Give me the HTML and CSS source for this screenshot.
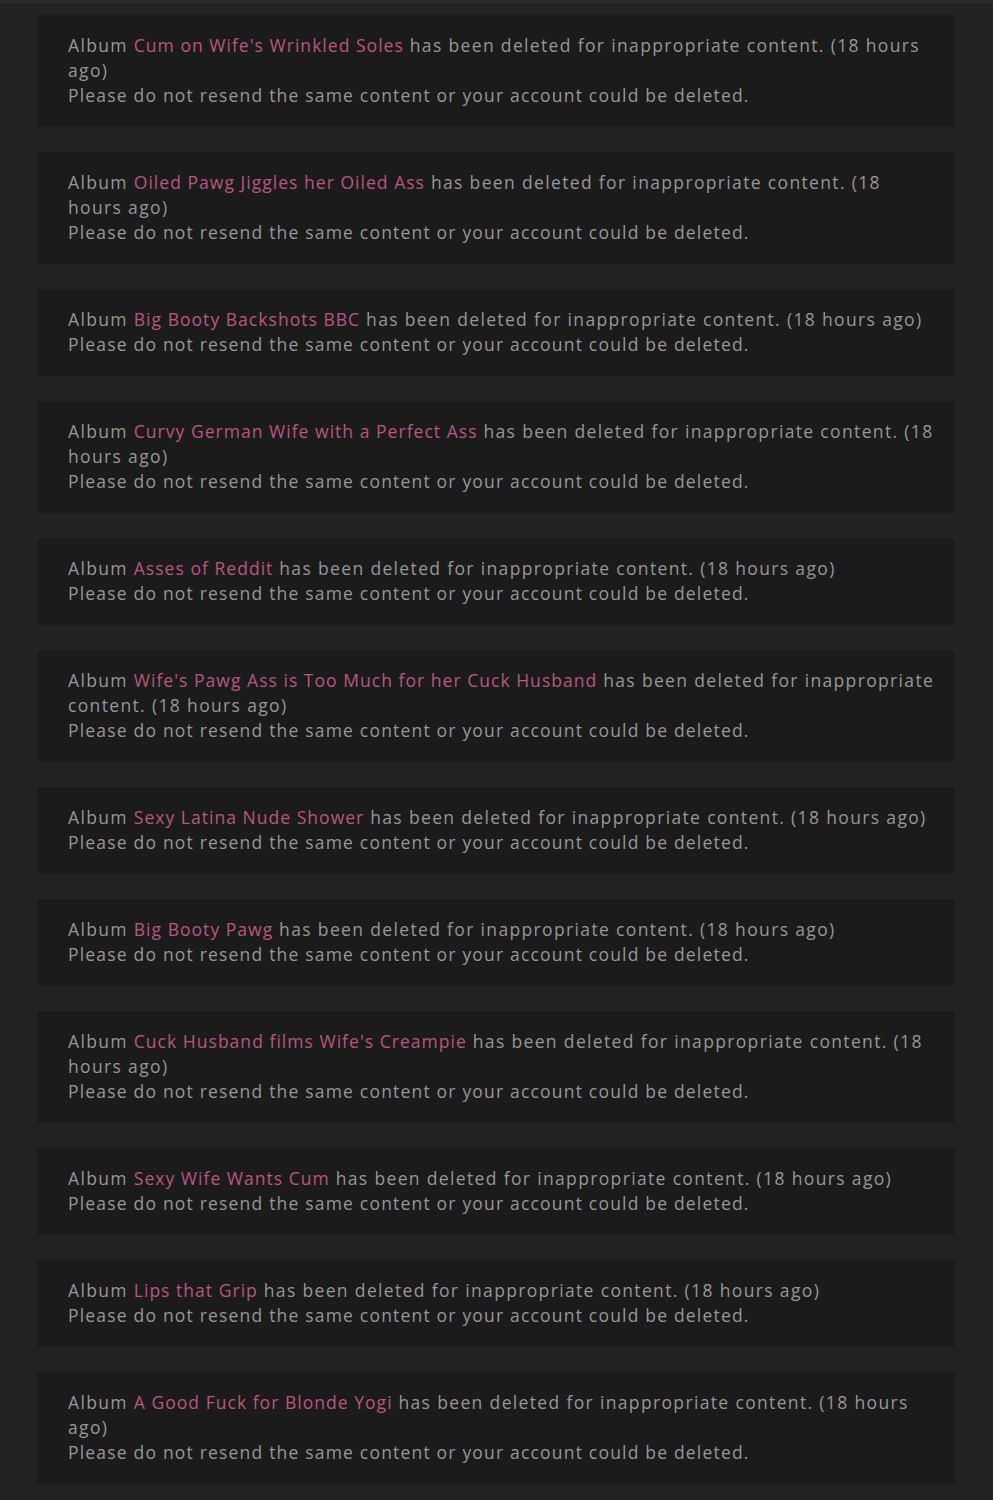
FILE: index.html
```html
<!DOCTYPE html>
<html lang="en">
<head>
    <meta charset="UTF-8">
    <meta name="viewport" content="width=device-width, initial-scale=1.0">
    <title>Notifications</title>
    <link rel="stylesheet" href="styles.css">
</head>
<body>

    <div class="notifications">
        <div class="notice">
            <p class="message">Album <a href="#">Cum on Wife's Wrinkled Soles</a> has been deleted for inappropriate content. (18 hours ago)</p>
            <p class="warning">Please do not resend the same content or your account could be deleted.</p>
        </div>
        <div class="notice">
            <p class="message">Album <a href="#">Oiled Pawg Jiggles her Oiled Ass</a> has been deleted for inappropriate content. (18 hours ago)</p>
            <p class="warning">Please do not resend the same content or your account could be deleted.</p>
        </div>
        <div class="notice">
            <p class="message">Album <a href="#">Big Booty Backshots BBC</a> has been deleted for inappropriate content. (18 hours ago)</p>
            <p class="warning">Please do not resend the same content or your account could be deleted.</p>
        </div>
        <div class="notice">
            <p class="message">Album <a href="#">Curvy German Wife with a Perfect Ass</a> has been deleted for inappropriate content. (18 hours ago)</p>
            <p class="warning">Please do not resend the same content or your account could be deleted.</p>
        </div>
        <div class="notice">
            <p class="message">Album <a href="#">Asses of Reddit</a> has been deleted for inappropriate content. (18 hours ago)</p>
            <p class="warning">Please do not resend the same content or your account could be deleted.</p>
        </div>
        <div class="notice">
            <p class="message">Album <a href="#">Wife's Pawg Ass is Too Much for her Cuck Husband</a> has been deleted for inappropriate content. (18 hours ago)</p>
            <p class="warning">Please do not resend the same content or your account could be deleted.</p>
        </div>
        <div class="notice">
            <p class="message">Album <a href="#">Sexy Latina Nude Shower</a> has been deleted for inappropriate content. (18 hours ago)</p>
            <p class="warning">Please do not resend the same content or your account could be deleted.</p>
        </div>
        <div class="notice">
            <p class="message">Album <a href="#">Big Booty Pawg</a> has been deleted for inappropriate content. (18 hours ago)</p>
            <p class="warning">Please do not resend the same content or your account could be deleted.</p>
        </div>
        <div class="notice">
            <p class="message">Album <a href="#">Cuck Husband films Wife's Creampie</a> has been deleted for inappropriate content. (18 hours ago)</p>
            <p class="warning">Please do not resend the same content or your account could be deleted.</p>
        </div>
        <div class="notice">
            <p class="message">Album <a href="#">Sexy Wife Wants Cum</a> has been deleted for inappropriate content. (18 hours ago)</p>
            <p class="warning">Please do not resend the same content or your account could be deleted.</p>
        </div>
        <div class="notice">
            <p class="message">Album <a href="#">Lips that Grip</a> has been deleted for inappropriate content. (18 hours ago)</p>
            <p class="warning">Please do not resend the same content or your account could be deleted.</p>
        </div>
        <div class="notice">
            <p class="message">Album <a href="#">A Good Fuck for Blonde Yogi</a> has been deleted for inappropriate content. (18 hours ago)</p>
            <p class="warning">Please do not resend the same content or your account could be deleted.</p>
        </div>
    </div>

</body>
</html>
```

FILE: styles.css
```css
body {
    margin: 0;
    background-color: #222222;
    border-top: 3px solid #2a2a2a;
    font-family: "Open Sans", Arial, sans-serif;
}

.notifications {
    display: flex;
    flex-direction: column;
    gap: 25px;
    padding: 12px 38px 20px 37px;
}

.notice {
    background-color: #1b1b1b;
    border-radius: 4px;
    padding: 18px 18px 19px 31px;
}

.notice p {
    margin: 0;
    font-size: 17.5px;
    line-height: 25px;
    color: #979797;
}

.notice .message {
    letter-spacing: 0.077em;
}

.notice .warning {
    letter-spacing: 0.068em;
}

.notice a {
    color: #b8577f;
    text-decoration: none;
    letter-spacing: 0.059em;
}
```
